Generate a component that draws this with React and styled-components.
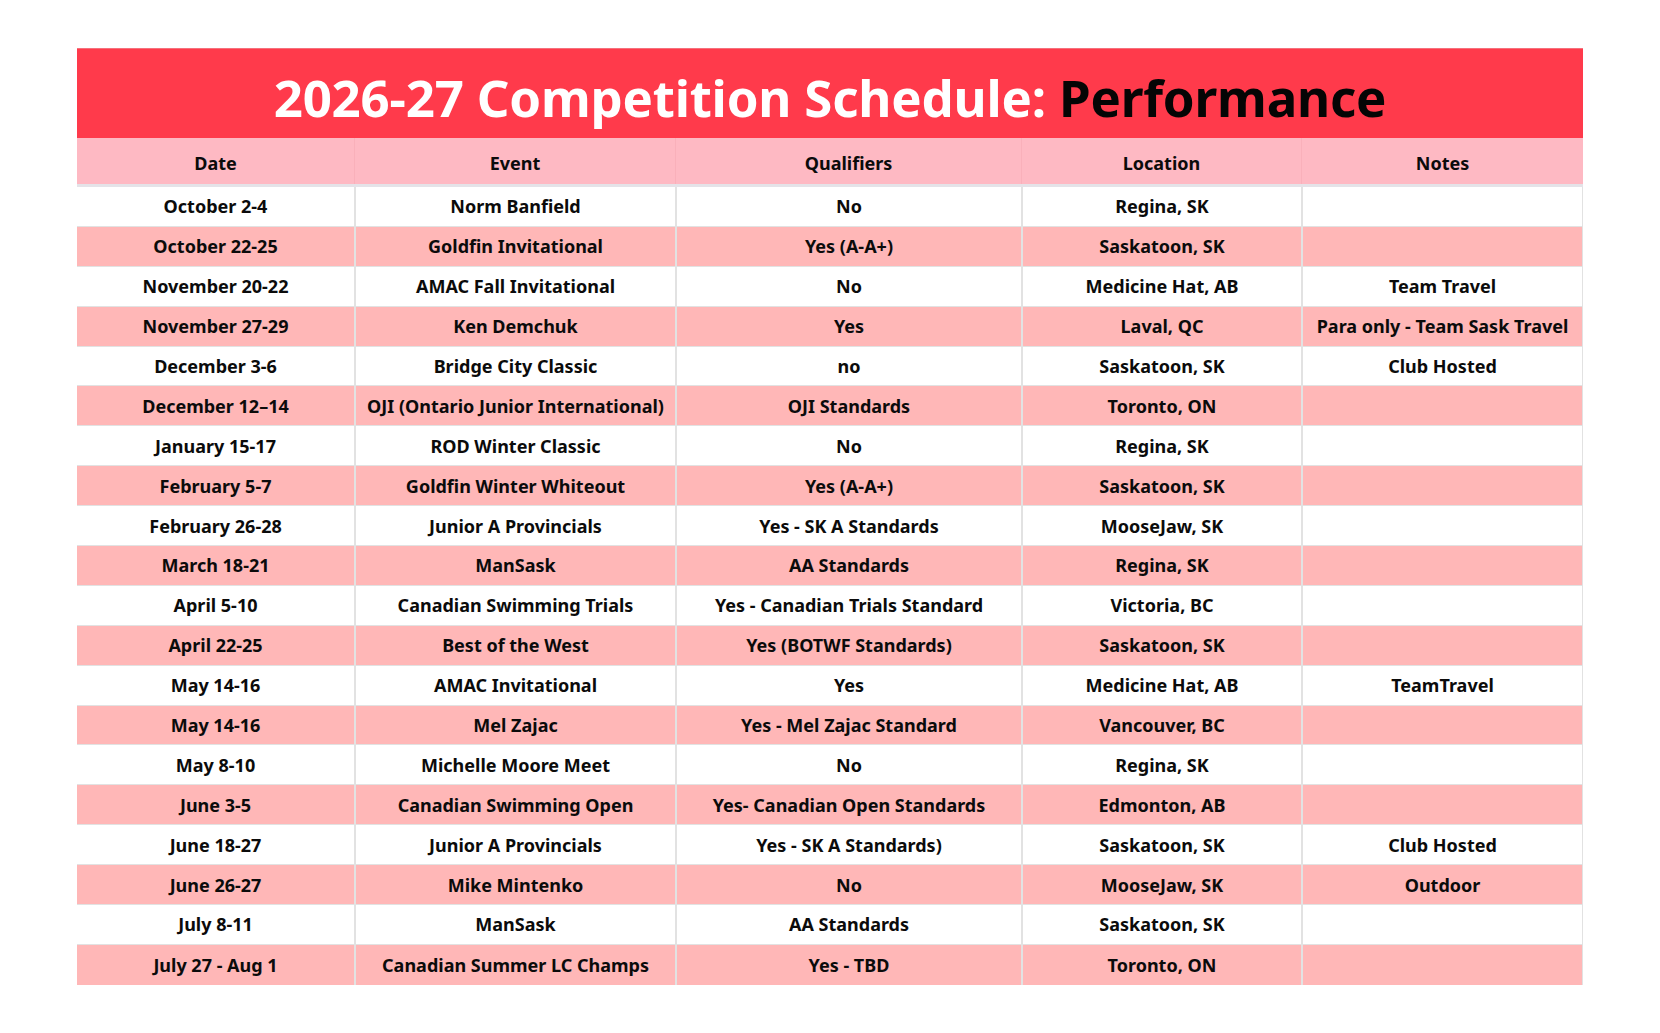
import React from "react";
import styled, { createGlobalStyle } from "styled-components";

const rows = [
	["October 2-4", "Norm Banfield", "No", "Regina, SK", ""],
	["October 22-25", "Goldfin Invitational", "Yes (A-A+)", "Saskatoon, SK", ""],
	["November 20-22", "AMAC Fall Invitational", "No", "Medicine Hat, AB", "Team Travel"],
	["November 27-29", "Ken Demchuk", "Yes", "Laval, QC", "Para only - Team Sask Travel"],
	["December 3-6", "Bridge City Classic", "no", "Saskatoon, SK", "Club Hosted"],
	["December 12–14", "OJI (Ontario Junior International)", "OJI Standards", "Toronto, ON", ""],
	["January 15-17", "ROD Winter Classic", "No", "Regina, SK", ""],
	["February 5-7", "Goldfin Winter Whiteout", "Yes (A-A+)", "Saskatoon, SK", ""],
	["February 26-28", "Junior A Provincials", "Yes - SK A Standards", "MooseJaw, SK", ""],
	["March 18-21", "ManSask", "AA Standards", "Regina, SK", ""],
	["April 5-10", "Canadian Swimming Trials", "Yes - Canadian Trials Standard", "Victoria, BC", ""],
	["April 22-25", "Best of the West", "Yes (BOTWF Standards)", "Saskatoon, SK", ""],
	["May 14-16", "AMAC Invitational", "Yes", "Medicine Hat, AB", "TeamTravel"],
	["May 14-16", "Mel Zajac", "Yes - Mel Zajac Standard", "Vancouver, BC", ""],
	["May 8-10", "Michelle Moore Meet", "No", "Regina, SK", ""],
	["June 3-5", "Canadian Swimming Open", "Yes- Canadian Open Standards", "Edmonton, AB", ""],
	["June 18-27", "Junior A Provincials", "Yes - SK A Standards)", "Saskatoon, SK", "Club Hosted"],
	["June 26-27", "Mike Mintenko", "No", "MooseJaw, SK", "Outdoor"],
	["July 8-11", "ManSask", "AA Standards", "Saskatoon, SK", ""],
	["July 27 - Aug 1", "Canadian Summer LC Champs", "Yes - TBD", "Toronto, ON", ""],
];

const headers = ["Date", "Event", "Qualifiers", "Location", "Notes"];

const App = () => {
	return (
		<>
			<GlobalStyle />
			<Page>
				<Sheet>
					<TitleBar>
						2026-27 Competition Schedule: <Accent>Performance</Accent>
					</TitleBar>
					<HeadRow>
						{headers.map((h) => (
							<HeadCell key={h}>{h}</HeadCell>
						))}
					</HeadRow>
					<Body>
						{rows.map((r, i) => (
							<Row key={i} $shaded={i % 2 === 1}>
								{r.map((c, j) => (
									<Cell key={j}>{c}</Cell>
								))}
							</Row>
						))}
					</Body>
				</Sheet>
			</Page>
		</>
	);
};

const GlobalStyle = createGlobalStyle`
	body {
		margin: 0;
		background: #fff;
		font-family: "Noto Sans", "Open Sans", sans-serif;
		color: #0b0b0b;
	}
`;

const Page = styled.div`
	padding: 48px 77px;
	width: 1660px;
	box-sizing: border-box;
`;

const Sheet = styled.div`
	width: 1506px;
`;

const TitleBar = styled.div`
	height: 90px;
	background-color: #ff3a4b;
	border-top: 1px solid #f5707c;
	box-sizing: border-box;
	display: flex;
	align-items: center;
	justify-content: center;
	padding-top: 6px;
	color: #fff;
	font-size: 51px;
	font-weight: 700;
	letter-spacing: -0.2px;
	white-space: pre;
`;

const Accent = styled.span`
	color: #050505;
`;

const columns = "277px 321px 346px 280px 1fr";

const HeadRow = styled.div`
	display: grid;
	grid-template-columns: ${columns};
	height: 49px;
	background-color: #feb9c3;
	border-bottom: 3px solid #e4e3e8;
	box-sizing: border-box;
`;

const HeadCell = styled.div`
	display: flex;
	align-items: center;
	justify-content: center;
	padding-top: 3px;
	font-size: 18px;
	font-weight: 700;
	& + & {
		border-left: 1px solid #f9b0ba;
	}
`;

const Body = styled.div`
	display: flex;
	flex-direction: column;
	border-right: 1px solid #e2e2e2;
`;

const Row = styled.div`
	display: grid;
	grid-template-columns: ${columns};
	height: 39.9px;
	box-sizing: border-box;
	border-bottom: 1px solid #e2e2e2;
	background-color: ${(p) => (p.$shaded ? "#ffb7b7" : "#ffffff")};
	&:last-child {
		border-bottom: none;
	}
`;

const Cell = styled.div`
	display: flex;
	align-items: center;
	justify-content: center;
	font-size: 18px;
	font-weight: 700;
	white-space: nowrap;
	& + & {
		border-left: 2px solid #e2e2e2;
	}
`;

export default App;
